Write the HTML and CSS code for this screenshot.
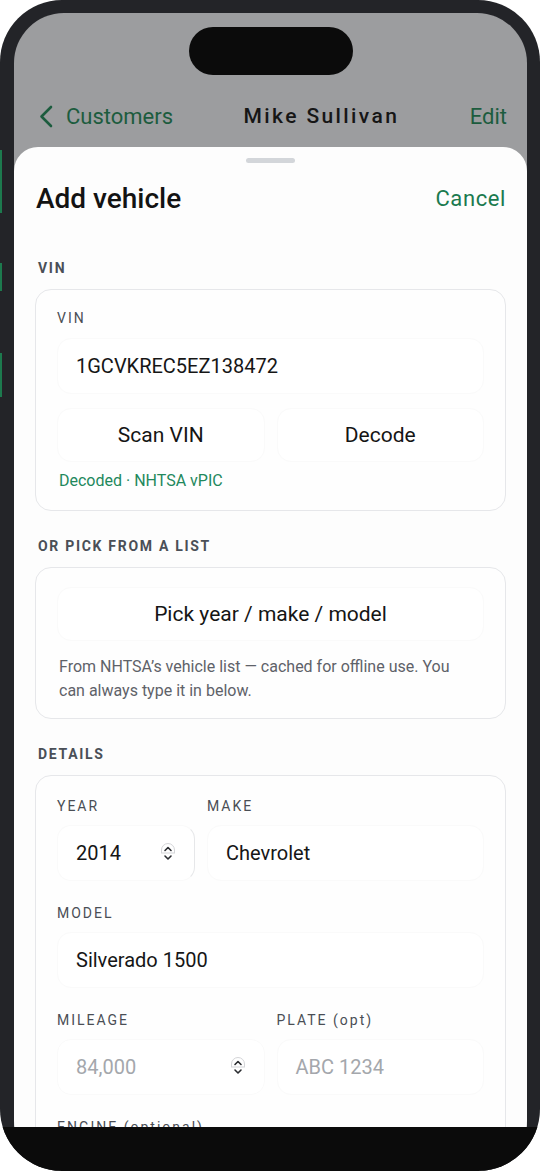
FILE: index.html
```html
<!DOCTYPE html>
<html lang="en">
<head>
    <meta charset="UTF-8" />
    <meta name="viewport" content="width=device-width, initial-scale=1.0">
    <title>Add vehicle</title>
    <link rel="stylesheet" href="styles.css">
</head>
<body>
    <div class="phone">
        <span class="side-key key-action"></span>
        <span class="side-key key-up"></span>
        <span class="side-key key-down"></span>

        <div class="screen">
            <div class="status">
                <div class="island"></div>
            </div>

            <nav class="nav">
                <a class="nav-back" href="#">
                    <svg width="14" height="23" viewBox="0 0 14 23" fill="none">
                        <path d="M12 2 L2.5 11.5 L12 21" stroke="currentColor" stroke-width="2.6" stroke-linecap="round" stroke-linejoin="round"/>
                    </svg>
                    <span>Customers</span>
                </a>
                <div class="nav-title">Mike Sullivan</div>
                <a class="nav-action" href="#">Edit</a>
            </nav>

            <section class="sheet">
                <div class="grabber"></div>

                <header class="sheet-head">
                    <h1>Add vehicle</h1>
                    <button type="button" class="link-btn">Cancel</button>
                </header>

                <!-- VIN -->
                <h2 class="section-label">VIN</h2>
                <div class="card card-vin">
                    <div class="field-label">VIN</div>
                    <div class="input"><span class="value">1GCVKREC5EZ138472</span></div>
                    <div class="btn-row">
                        <button type="button" class="btn">Scan VIN</button>
                        <button type="button" class="btn">Decode</button>
                    </div>
                    <p class="note">Decoded · NHTSA vPIC</p>
                </div>

                <!-- list picker -->
                <h2 class="section-label">OR PICK FROM A LIST</h2>
                <div class="card card-pick">
                    <button type="button" class="btn btn-wide">Pick year / make / model</button>
                    <p class="hint">From NHTSA’s vehicle list — cached for offline use. You can always type it in below.</p>
                </div>

                <!-- details -->
                <h2 class="section-label">DETAILS</h2>
                <div class="card card-details">
                    <div class="row row-year">
                        <div class="field">
                            <div class="field-label">YEAR</div>
                            <div class="input input-year">
                                <span class="value">2014</span>
                                <svg class="stepper" width="16" height="22" viewBox="0 0 16 22" fill="none">
                                    <path d="M1.5 11 V8 a6.5 6.5 0 0 1 13 0 V11" stroke="#d4d5d8" stroke-width="1"/>
                                    <path d="M1 11 H15" stroke="#d4d5d8" stroke-width="1"/>
                                    <path d="M5 8.5 L8 5.5 L11 8.5" stroke="#2b2d31" stroke-width="1.6" stroke-linecap="round" stroke-linejoin="round"/>
                                    <path d="M5 14 L8 17 L11 14" stroke="#2b2d31" stroke-width="1.6" stroke-linecap="round" stroke-linejoin="round"/>
                                </svg>
                            </div>
                        </div>
                        <div class="field">
                            <div class="field-label">MAKE</div>
                            <div class="input"><span class="value">Chevrolet</span></div>
                        </div>
                    </div>

                    <div class="field">
                        <div class="field-label">MODEL</div>
                        <div class="input"><span class="value">Silverado 1500</span></div>
                    </div>

                    <div class="row row-half">
                        <div class="field">
                            <div class="field-label">MILEAGE</div>
                            <div class="input">
                                <span class="value placeholder">84,000</span>
                                <svg class="stepper" width="16" height="22" viewBox="0 0 16 22" fill="none">
                                    <path d="M1.5 11 V8 a6.5 6.5 0 0 1 13 0 V11" stroke="#d4d5d8" stroke-width="1"/>
                                    <path d="M1 11 H15" stroke="#d4d5d8" stroke-width="1"/>
                                    <path d="M5 8.5 L8 5.5 L11 8.5" stroke="#2b2d31" stroke-width="1.6" stroke-linecap="round" stroke-linejoin="round"/>
                                    <path d="M5 14 L8 17 L11 14" stroke="#2b2d31" stroke-width="1.6" stroke-linecap="round" stroke-linejoin="round"/>
                                </svg>
                            </div>
                        </div>
                        <div class="field">
                            <div class="field-label">PLATE (opt)</div>
                            <div class="input"><span class="value placeholder">ABC 1234</span></div>
                        </div>
                    </div>

                    <div class="field">
                        <div class="field-label">ENGINE (optional)</div>
                    </div>
                </div>
            </section>
        </div>

        <div class="chin"></div>
    </div>
</body>
</html>
```
FILE: styles.css
```css
/* page */
* {
    box-sizing: border-box;
}

body {
    margin: 0;
    background: #fff;
    font-family: Roboto, "Liberation Sans", Arial, sans-serif;
    color: #151515;
    overflow: hidden;
}

/* phone frame */
.phone {
    position: relative;
    width: 540px;
    height: 1171px;
    padding: 13px 13px 0 14px;
    background: #232428;
    border-radius: 62px;
    overflow: hidden;
}

.side-key {
    position: absolute;
    left: 0;
    width: 2px;
    background: #1d7a4e;
}

.key-action { top: 150px; height: 63px; }
.key-up { top: 263px; height: 28px; }
.key-down { top: 353px; height: 44px; }

.chin {
    position: absolute;
    left: 0;
    right: 0;
    bottom: 0;
    height: 44px;
    background: #0b0b0b;
}

/* screen */
.screen {
    height: 100%;
    background: #9c9d9f;
    border-radius: 50px;
    overflow: hidden;
    display: flex;
    flex-direction: column;
}

.status {
    flex-shrink: 0;
    height: 81px;
    padding-top: 14px;
    display: flex;
    justify-content: center;
}

.island {
    width: 164px;
    height: 48px;
    border-radius: 24px;
    background: #0b0b0b;
}

/* nav bar */
.nav {
    flex-shrink: 0;
    height: 44px;
    padding: 0 20px 0 25px;
    display: flex;
    align-items: center;
}

.nav a {
    color: #1c5c3e;
    text-decoration: none;
    font-size: 22px;
}

.nav-back {
    display: flex;
    align-items: center;
    gap: 13px;
}

.nav-title {
    flex: 1;
    text-align: center;
    font-size: 21px;
    font-weight: 500;
    letter-spacing: 2.4px;
    color: #161616;
}

/* sheet */
.sheet {
    flex: 1 0 auto;
    margin-top: 9px;
    padding: 11px 21px 0;
    background: #fdfdfd;
    border-radius: 24px 24px 0 0;
}

.grabber {
    width: 49px;
    height: 5px;
    margin: 0 auto;
    border-radius: 3px;
    background: #d3d6da;
}

.sheet-head {
    margin-top: 17px;
    height: 36px;
    display: flex;
    justify-content: space-between;
    align-items: center;
}

.sheet-head h1 {
    margin: 0 0 0 1px;
    font-size: 28px;
    font-weight: 500;
    color: #131313;
}

.link-btn {
    padding: 0;
    border: none;
    background: none;
    font-family: inherit;
    font-size: 22px;
    letter-spacing: 0.6px;
    color: #1b7a4f;
}

.section-label {
    margin: 27px 0 13px 3px;
    font-size: 14px;
    line-height: 16px;
    font-weight: 700;
    letter-spacing: 1.7px;
    color: #4a4f57;
}

.sheet-head + .section-label {
    margin-top: 44px;
}

/* cards */
.card {
    border: 1px solid #e6e7ea;
    border-radius: 16px;
    background: #fefefe;
    padding: 20px 21px 19px;
}

.card-pick {
    padding-top: 19px;
    padding-bottom: 15px;
}

.card-details {
    padding-top: 22px;
    display: flex;
    flex-direction: column;
    gap: 24px;
}

.field-label {
    font-size: 14px;
    line-height: 16px;
    letter-spacing: 2px;
    color: #4a4e55;
    margin-bottom: 12px;
}

.card-details .field-label {
    margin-bottom: 11px;
}

.input {
    height: 56px;
    padding: 0 18px;
    display: flex;
    align-items: center;
    justify-content: space-between;
    border: 1px solid #fafafa;
    border-radius: 14px;
    background: #fff;
}

.value {
    font-size: 20px;
    color: #161616;
}

.placeholder {
    color: #a4a7ac;
}

.stepper {
    flex-shrink: 0;
}

.input-year {
    border-right-color: #e6e7e9;
}

/* buttons */
.btn-row {
    margin-top: 14px;
    display: grid;
    grid-template-columns: 1fr 1fr;
    gap: 12px;
}

.btn {
    height: 54px;
    border: 1px solid #fafafa;
    border-radius: 14px;
    background: #fff;
    font-family: inherit;
    font-size: 21px;
    color: #151515;
}

.btn-wide {
    width: 100%;
}

.note {
    margin: 9px 0 0 2px;
    font-size: 16px;
    line-height: 20px;
    color: #22885c;
}

.hint {
    margin: 14px 0 0 2px;
    padding-right: 14px;
    font-size: 16px;
    line-height: 24px;
    color: #5e6269;
}

/* details grid */
.row {
    display: grid;
    gap: 12px;
}

.row-year {
    grid-template-columns: 138px 1fr;
}

.row-half {
    grid-template-columns: 1fr 1fr;
}
```
